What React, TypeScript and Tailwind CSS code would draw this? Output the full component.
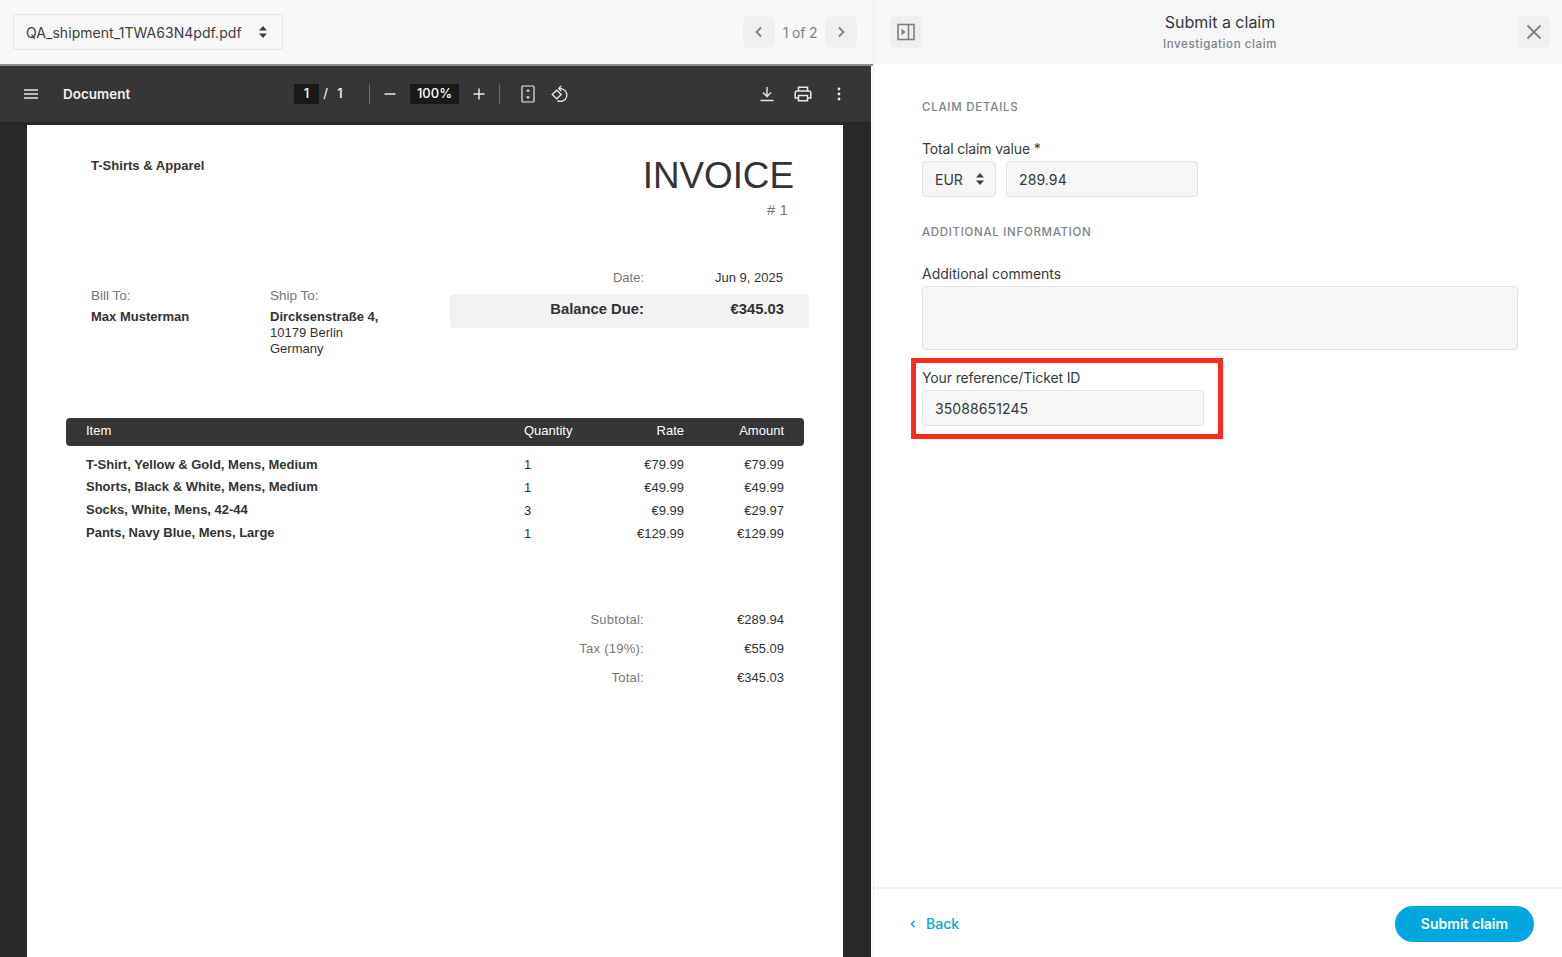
import React from "react";

const UI = "font-['Inter',sans-serif]";
const PDF = "font-['Liberation_Sans',Arial,sans-serif]";

const Updown = () => (
  <svg width="10" height="14" viewBox="0 0 10 14" fill="#3a3f42"><path d="M5 1 9 5.5H1zM5 13 1 8.5h8z" /></svg>
);
const NavBtn = ({ children, cls = "" }: { children: React.ReactNode; cls?: string }) => (
  <div className={"w-8 h-8 rounded-md bg-[#efefef] flex items-center justify-center shrink-0 " + cls}>{children}</div>
);
const Chev = ({ d }: { d: string }) => (
  <svg width="16" height="16" viewBox="0 0 16 16" fill="none" stroke="#7d8487" strokeWidth="1.8"><path d={d} /></svg>
);

const rows = [
  ["T-Shirt, Yellow & Gold, Mens, Medium", "1", "€79.99", "€79.99", ""],
  ["Shorts, Black & White, Mens, Medium", "1", "€49.99", "€49.99", "pb-[2px]"],
  ["Socks, White, Mens, 42-44", "3", "€9.99", "€29.97", "pb-[2px]"],
  ["Pants, Navy Blue, Mens, Large", "1", "€129.99", "€129.99", "pb-[2px]"],
];

const Toolbar = () => (
  <div className={"h-[56px] bg-[#363636] flex items-center text-white shrink-0 " + UI}>
    <svg className="ml-[24px] shrink-0" width="14" height="10" viewBox="0 0 14 10" fill="none" stroke="#e8e8e8" strokeWidth="1.4"><path d="M0 1h14M0 5h14M0 9h14" /></svg>
    <div className="ml-[25px] w-[231px] text-[13.5px] font-semibold text-[#f1f1f1]">Document</div>
    <div className="w-[25px] h-[20px] bg-[#191919] flex items-center justify-center text-[13px] font-medium">1</div>
    <div className="w-[13px] text-center text-[13px]">/</div>
    <div className="w-[16px] text-center text-[13px] font-medium">1</div>
    <div className="ml-[21px] w-px h-[20px] bg-[#6a6a6a]" />
    <svg className="ml-[14px]" width="12" height="12" viewBox="0 0 12 12" stroke="#e8e8e8" strokeWidth="1.5"><path d="M0.5 6h11" /></svg>
    <div className="ml-[14px] w-[49px] h-[20px] bg-[#191919] flex items-center justify-center text-[13px] font-medium">100%</div>
    <svg className="ml-[14px]" width="12" height="12" viewBox="0 0 12 12" stroke="#e8e8e8" strokeWidth="1.5"><path d="M0.5 6h11M6 .5v11" /></svg>
    <div className="ml-[14px] w-px h-[20px] bg-[#6a6a6a]" />
    <svg className="ml-[21px]" width="14" height="18" viewBox="0 0 14 18" fill="none" stroke="#e8e8e8" strokeWidth="1.2">
      <rect x="1" y="1" width="12" height="16" rx="1" />
      <path d="M7 4 5 6.500h4zM7 14 5 11.500h4z" fill="#e8e8e8" stroke="none" />
    </svg>
    <svg className="ml-[15px]" width="20" height="20" viewBox="0 0 20 20" fill="none" stroke="#e8e8e8" strokeWidth="1.3">
      <path d="M2.2 10.5 6.8 6.2l4.400 4.300-4.400 4.300z" />
      <path d="M9 4.600h2a6.400 6.400 0 1 1-3.600 12" />
      <path d="M11.200 2 8.700 4.600l2.500 2.500" />
    </svg>
    <div className="ml-auto flex items-center">
      <svg width="14" height="16" viewBox="0 0 14 16" fill="none" stroke="#e8e8e8" strokeWidth="1.4"><path d="M7 1v9M3 6.500 7 10.500l4-4M.5 14.500h13" /></svg>
      <svg className="ml-[20px]" width="18" height="16" viewBox="0 0 18 16" fill="none" stroke="#e8e8e8" strokeWidth="1.5">
        <path d="M4.500 5V1.200h9V5M4.500 12H1.200V6.800A1.800 1.800 0 0 1 3 5h12a1.800 1.800 0 0 1 1.800 1.800V12h-3.300" />
        <path d="M4.500 9.500h9v5.300h-9z" />
      </svg>
      <svg className="ml-[25px] mr-[30px]" width="4" height="14" viewBox="0 0 4 14" fill="#e8e8e8"><circle cx="2" cy="2" r="1.400" /><circle cx="2" cy="7" r="1.400" /><circle cx="2" cy="12" r="1.400" /></svg>
    </div>
  </div>
);

const Invoice = () => (
  <div className={"ml-[27px] mt-[3px] w-[816px] flex-1 bg-white text-[#333] text-[13px] leading-[16px] " + PDF}>
    <div className="flex justify-between pl-[64px] pr-[49px] pt-[33px]">
      <div className="font-bold text-[#333] tracking-[0.03px]">T-Shirts &amp; Apparel</div>
      <div className="text-right -mt-[4px]">
        <div className="text-[36.800px] leading-[44px] text-[#333]">INVOICE</div>
        <div className="text-[#777] text-[14.500px] leading-[16px] mt-[4px] pr-[6px] tracking-[0.3px]">#&nbsp;1</div>
      </div>
    </div>
    <div className="flex pl-[64px] pr-[34px] mt-[50px]">
      <div className="w-[179px] pt-[20px]">
        <div className="text-[#777] text-[13.500px]">Bill To:</div>
        <div className="font-bold mt-[5px]">Max Musterman</div>
      </div>
      <div className="w-[180px] pt-[20px]">
        <div className="text-[#777] text-[13.500px]">Ship To:</div>
        <div className="font-bold mt-[5px]">Dircksenstraße 4,</div>
        <div>10179 Berlin</div>
        <div>Germany</div>
      </div>
      <div className="flex-1">
        <div className="flex h-[20px] items-center text-right">
          <div className="w-[194px] text-[#777]">Date:</div>
          <div className="w-[139px]">Jun 9, 2025</div>
        </div>
        <div className="mt-[6px] flex h-[34px] items-center bg-[#f2f2f2] rounded-[4px] pb-[5px] text-right font-bold text-[14.800px]">
          <div className="w-[194px]">Balance Due:</div>
          <div className="w-[140px]">€345.03</div>
        </div>
      </div>
    </div>
    <div className="ml-[39px] w-[738px] mt-[61px]">
      <div className="h-[28px] bg-[#363636] rounded-[4px] text-white flex items-center px-[20px] pb-[2px]">
        <div className="w-[438px]">Item</div>
        <div className="w-[70px]">Quantity</div>
        <div className="w-[90px] text-right">Rate</div>
        <div className="w-[100px] text-right">Amount</div>
      </div>
      <div className="mt-[7px]">
        {rows.map((r) => (
          <div key={r[0]} className="flex items-center px-[20px] h-[23px]">
            <div className={"w-[438px] font-bold " + r[4]}>{r[0]}</div>
            <div className="w-[70px]">{r[1]}</div>
            <div className="w-[90px] text-right">{r[2]}</div>
            <div className="w-[100px] text-right">{r[3]}</div>
          </div>
        ))}
      </div>
    </div>
    <div className="mt-[60px] ml-[423px] w-[334px]">
      {[["Subtotal:", "€289.94"], ["Tax (19%):", "€55.09"], ["Total:", "€345.03"]].map(([a, b]) => (
        <div key={a} className="flex h-[29px] items-center text-right">
          <div className="w-[194px] text-[#777] tracking-[0.25px]">{a}</div>
          <div className="w-[140px]">{b}</div>
        </div>
      ))}
    </div>
  </div>
);

const Field = ({ children, cls }: { children: React.ReactNode; cls: string }) => (
  <div className={"h-9 bg-[#f6f6f6] border border-[#e3e3e3] rounded-[4px] flex items-center text-[14px] text-[#333a3d] " + cls}>{children}</div>
);

export default function App() {
  return (
    <div className={"w-[1562px] h-[957px] flex overflow-hidden bg-white " + UI}>
      <div className="w-[873px] flex flex-col shrink-0">
        <div className="h-[64px] bg-[#f7f7f7] flex items-center pl-[13px] pr-[16px] shrink-0">
          <div className="w-[270px] h-9 border border-[#e3e3e3] rounded-[4px] flex items-center justify-between pl-3 pr-[14px] text-[14px] text-[#3a3f42]">
            <span className="tracking-[0.05px]">QA_shipment_1TWA63N4pdf.pdf</span>
            <Updown />
          </div>
          <NavBtn cls="ml-auto"><Chev d="M10 3.500 5.500 8l4.500 4.500" /></NavBtn>
          <span className="w-[50px] text-center text-[14px] text-[#7d8487] tracking-[-0.2px]">1 of 2</span>
          <NavBtn><Chev d="M6 3.500 10.500 8 6 12.500" /></NavBtn>
        </div>
        <div className="h-[2px] bg-[#8c8c8c] shrink-0" />
        <div className="flex-1 flex flex-col bg-[#282828] border-r-2 border-white min-h-0">
          <Toolbar />
          <Invoice />
        </div>
      </div>
      <div className="flex-1 min-w-0 flex flex-col border-l border-[#ededed]">
        <div className="h-[64px] bg-[#f6f6f6] flex items-center pl-4 pr-3 shrink-0">
          <NavBtn>
            <svg width="18" height="18" viewBox="0 0 18 18" fill="none" stroke="#7d8487" strokeWidth="1.600">
              <rect x="1" y="1.500" width="16" height="15" />
              <path d="M11.500 1.500v15" />
              <path d="M4.500 5.500 8.500 9l-4 3.500z" fill="#7d8487" stroke="none" />
            </svg>
          </NavBtn>
          <div className="flex-1 text-center -mt-[1px]">
            <div className="text-[16px] leading-[20px] text-[#333a3d]">Submit a claim</div>
            <div className="text-[11.500px] leading-[16px] mt-[4px] text-[#7d8487] tracking-[0.6px] font-medium">Investigation claim</div>
          </div>
          <NavBtn>
            <svg width="16" height="16" viewBox="0 0 16 16" stroke="#7d8487" strokeWidth="1.800"><path d="M1.500 1.500l13 13M14.500 1.500l-13 13" /></svg>
          </NavBtn>
        </div>
        <div className="flex-1 pl-[48px] pr-[44px] relative">
          <div className="mt-[35px] text-[11.500px] leading-[16px] tracking-[0.75px] text-[#7d8487] font-medium">CLAIM DETAILS</div>
          <div className="mt-[25px] text-[14px] leading-[18px] text-[#333a3d] tracking-[-0.15px]">Total claim value *</div>
          <div className="flex gap-[10px] mt-[3px]">
            <Field cls="w-[74px] pl-3 pr-[10px] justify-between"><span>EUR</span><Updown /></Field>
            <Field cls="w-[192px] pl-3 tracking-[0.1px]">289.94</Field>
          </div>
          <div className="mt-[27px] text-[11.500px] leading-[16px] tracking-[0.68px] text-[#7d8487] font-medium">ADDITIONAL INFORMATION</div>
          <div className="mt-[25px] text-[14px] leading-[18px] text-[#333a3d]">Additional comments</div>
          <div className="mt-[3px] h-[64px] bg-[#f6f6f6] border border-[#e3e3e3] rounded-[4px]" />
          <div className="mt-[19px] text-[14px] leading-[18px] text-[#333a3d] tracking-[-0.13px]">Your reference/Ticket ID</div>
          <Field cls="w-[282px] pl-3 mt-[3px] tracking-[0.1px]">35088651245</Field>
          <div className="absolute left-[37px] top-[294px] w-[312px] h-[81px] border-[5px] border-[#ff2a1a]" />
        </div>
        <div className="h-[70px] border-t-2 border-[#f3f3f3] flex items-center pl-[36px] pr-[28px] pt-[1px] shrink-0">
          <svg width="6" height="8" viewBox="0 0 6 8" fill="none" stroke="#00a8de" strokeWidth="1.400"><path d="M4.500 .8 1.500 4l3 3.200" /></svg>
          <span className="ml-[10px] text-[14px] font-medium text-[#00a8de]">Back</span>
          <div className="ml-auto w-[139px] h-9 rounded-full bg-[#00a8de] text-white text-[14px] font-semibold flex items-center justify-center">Submit claim</div>
        </div>
      </div>
    </div>
  );
}
